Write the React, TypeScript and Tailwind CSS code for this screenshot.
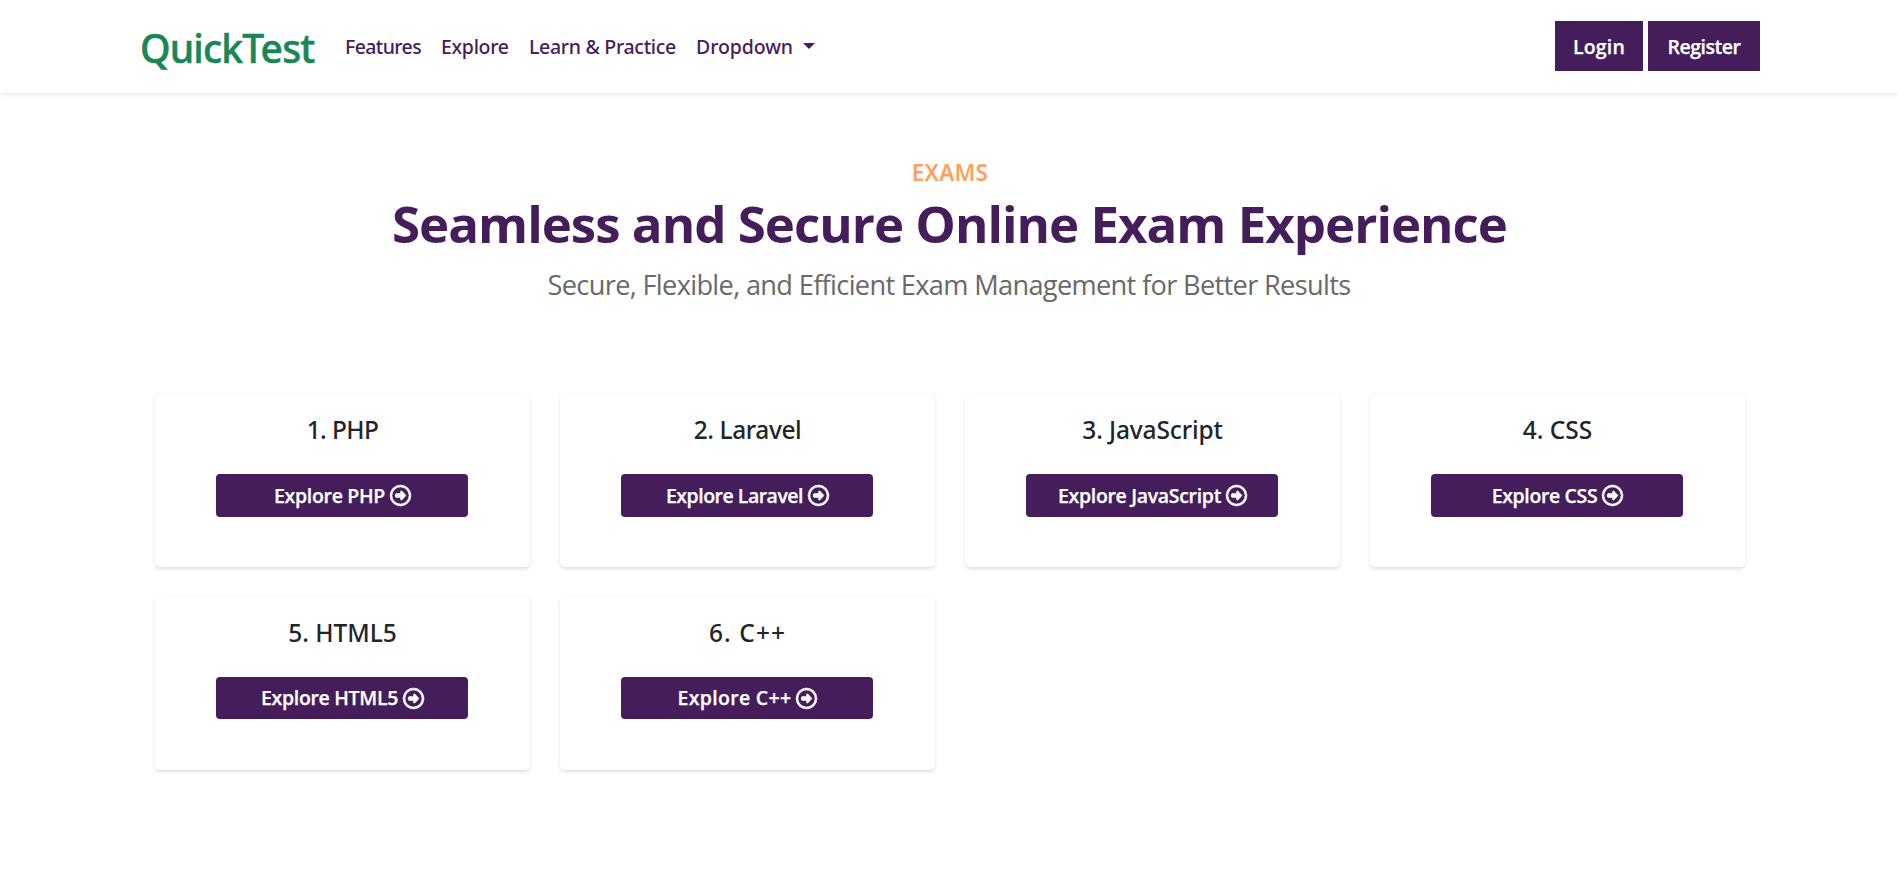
import { FaRegCircleRight } from "react-icons/fa6";

type Exam = {
  name: string;
  titleSpacing: string;
  buttonSpacing: string;
};

const navLinks = [
  { label: "Features", className: "w-[96px] tracking-[-0.6px]" },
  { label: "Explore", className: "w-[88px] tracking-[-0.3px]" },
  { label: "Learn & Practice", className: "w-[167px] tracking-[-0.3px]" },
];

const exams: Exam[] = [
  { name: "PHP", titleSpacing: "tracking-[-0.6px]", buttonSpacing: "tracking-[-0.32px]" },
  { name: "Laravel", titleSpacing: "tracking-[-0.4px]", buttonSpacing: "tracking-[-0.5px]" },
  { name: "JavaScript", titleSpacing: "tracking-[-0.13px]", buttonSpacing: "tracking-[-0.32px]" },
  { name: "CSS", titleSpacing: "tracking-normal", buttonSpacing: "tracking-[-0.36px]" },
  { name: "HTML5", titleSpacing: "tracking-normal", buttonSpacing: "tracking-[-0.32px]" },
  { name: "C++", titleSpacing: "tracking-[1.1px]", buttonSpacing: "tracking-[0.3px]" },
];

function Navbar() {
  return (
    <header className="h-[93px] bg-white shadow-[0_2.5px_5px_rgba(0,0,0,0.075)]">
      <div className="mx-auto flex h-full w-[1620px] items-center pb-px">
        <a
          href="#"
          className="w-[206px] pt-[2px] pl-px text-[39px] leading-none font-medium tracking-[-0.85px] text-[#198754] [-webkit-text-stroke:0.5px_#198754]"
        >
          QuickTest
        </a>
        <nav className="flex items-center pt-[2px] text-[19.5px] font-medium text-[#461d5b]">
          {navLinks.map((link) => (
            <a key={link.label} href="#" className={`whitespace-nowrap ${link.className}`}>
              {link.label}
            </a>
          ))}
          <button type="button" className="flex items-center gap-[10px] tracking-[-0.1px]">
            Dropdown
            <svg width="12" height="6" viewBox="0 0 12 6" className="mb-[2px]" fill="currentColor">
              <path d="M0 0h12L6 6z" />
            </svg>
          </button>
        </nav>
        <div className="-mr-px ml-auto flex gap-[5px] font-['Open_Sans'] text-[19.5px] font-semibold text-white [-webkit-text-stroke:0.25px_white]">
          <a href="#" className="flex h-[50px] w-[88px] items-center justify-center bg-[#461d5b] pt-px tracking-[0.15px]">
            Login
          </a>
          <a href="#" className="flex h-[50px] w-[112px] items-center justify-center bg-[#461d5b] pt-px tracking-[-0.45px]">
            Register
          </a>
        </div>
      </div>
    </header>
  );
}

function ExamCard({ exam, index }: { exam: Exam; index: number }) {
  return (
    <article className="h-[172.75px] rounded-[5px] bg-white pt-[21px] shadow-[0_1.5px_3.5px_rgba(0,0,0,0.13)]">
      <h5 className={`text-center text-[24.5px] leading-[30px] font-medium text-[#212529] ${exam.titleSpacing}`}>
        {index}. {exam.name}
      </h5>
      <a
        href="#"
        className="mt-[29px] ml-[61px] flex h-[42.5px] w-[252px] items-center justify-center gap-[5px] rounded-[4px] bg-[#461d5b] pl-px font-['Open_Sans'] text-[19.5px] font-semibold text-white [-webkit-text-stroke:0.25px_white]"
      >
        <span className={exam.buttonSpacing}>Explore {exam.name}</span>
        <FaRegCircleRight size={21} stroke="currentColor" strokeWidth={14} className="overflow-visible" />
      </a>
    </article>
  );
}

export default function App() {
  return (
    <div className="min-h-screen bg-white font-['Noto_Sans',sans-serif]">
      <Navbar />
      <main className="mx-auto w-[1590px] pt-[66px]">
        <div className="text-center">
          <h6 className="pl-[2px] text-[22.5px] leading-7 font-semibold tracking-[0.2px] text-[#ff9f5f]">EXAMS</h6>
          <h1 className="mt-[5px] pl-px font-['Open_Sans'] text-[51px] leading-[62px] font-bold tracking-[-0.99px] text-[#461d5b]">
            Seamless and Secure Online Exam Experience
          </h1>
          <p className="mt-[10px] font-['Open_Sans'] text-[27.2px] leading-[42px] tracking-[-0.67px] text-[#696969]">
            Secure, Flexible, and Efficient Exam Management for Better Results
          </p>
        </div>
        <section className="mt-[88px] ml-px grid grid-cols-[repeat(4,375px)] gap-[30px]">
          {exams.map((exam, i) => (
            <ExamCard key={exam.name} exam={exam} index={i + 1} />
          ))}
        </section>
      </main>
    </div>
  );
}
